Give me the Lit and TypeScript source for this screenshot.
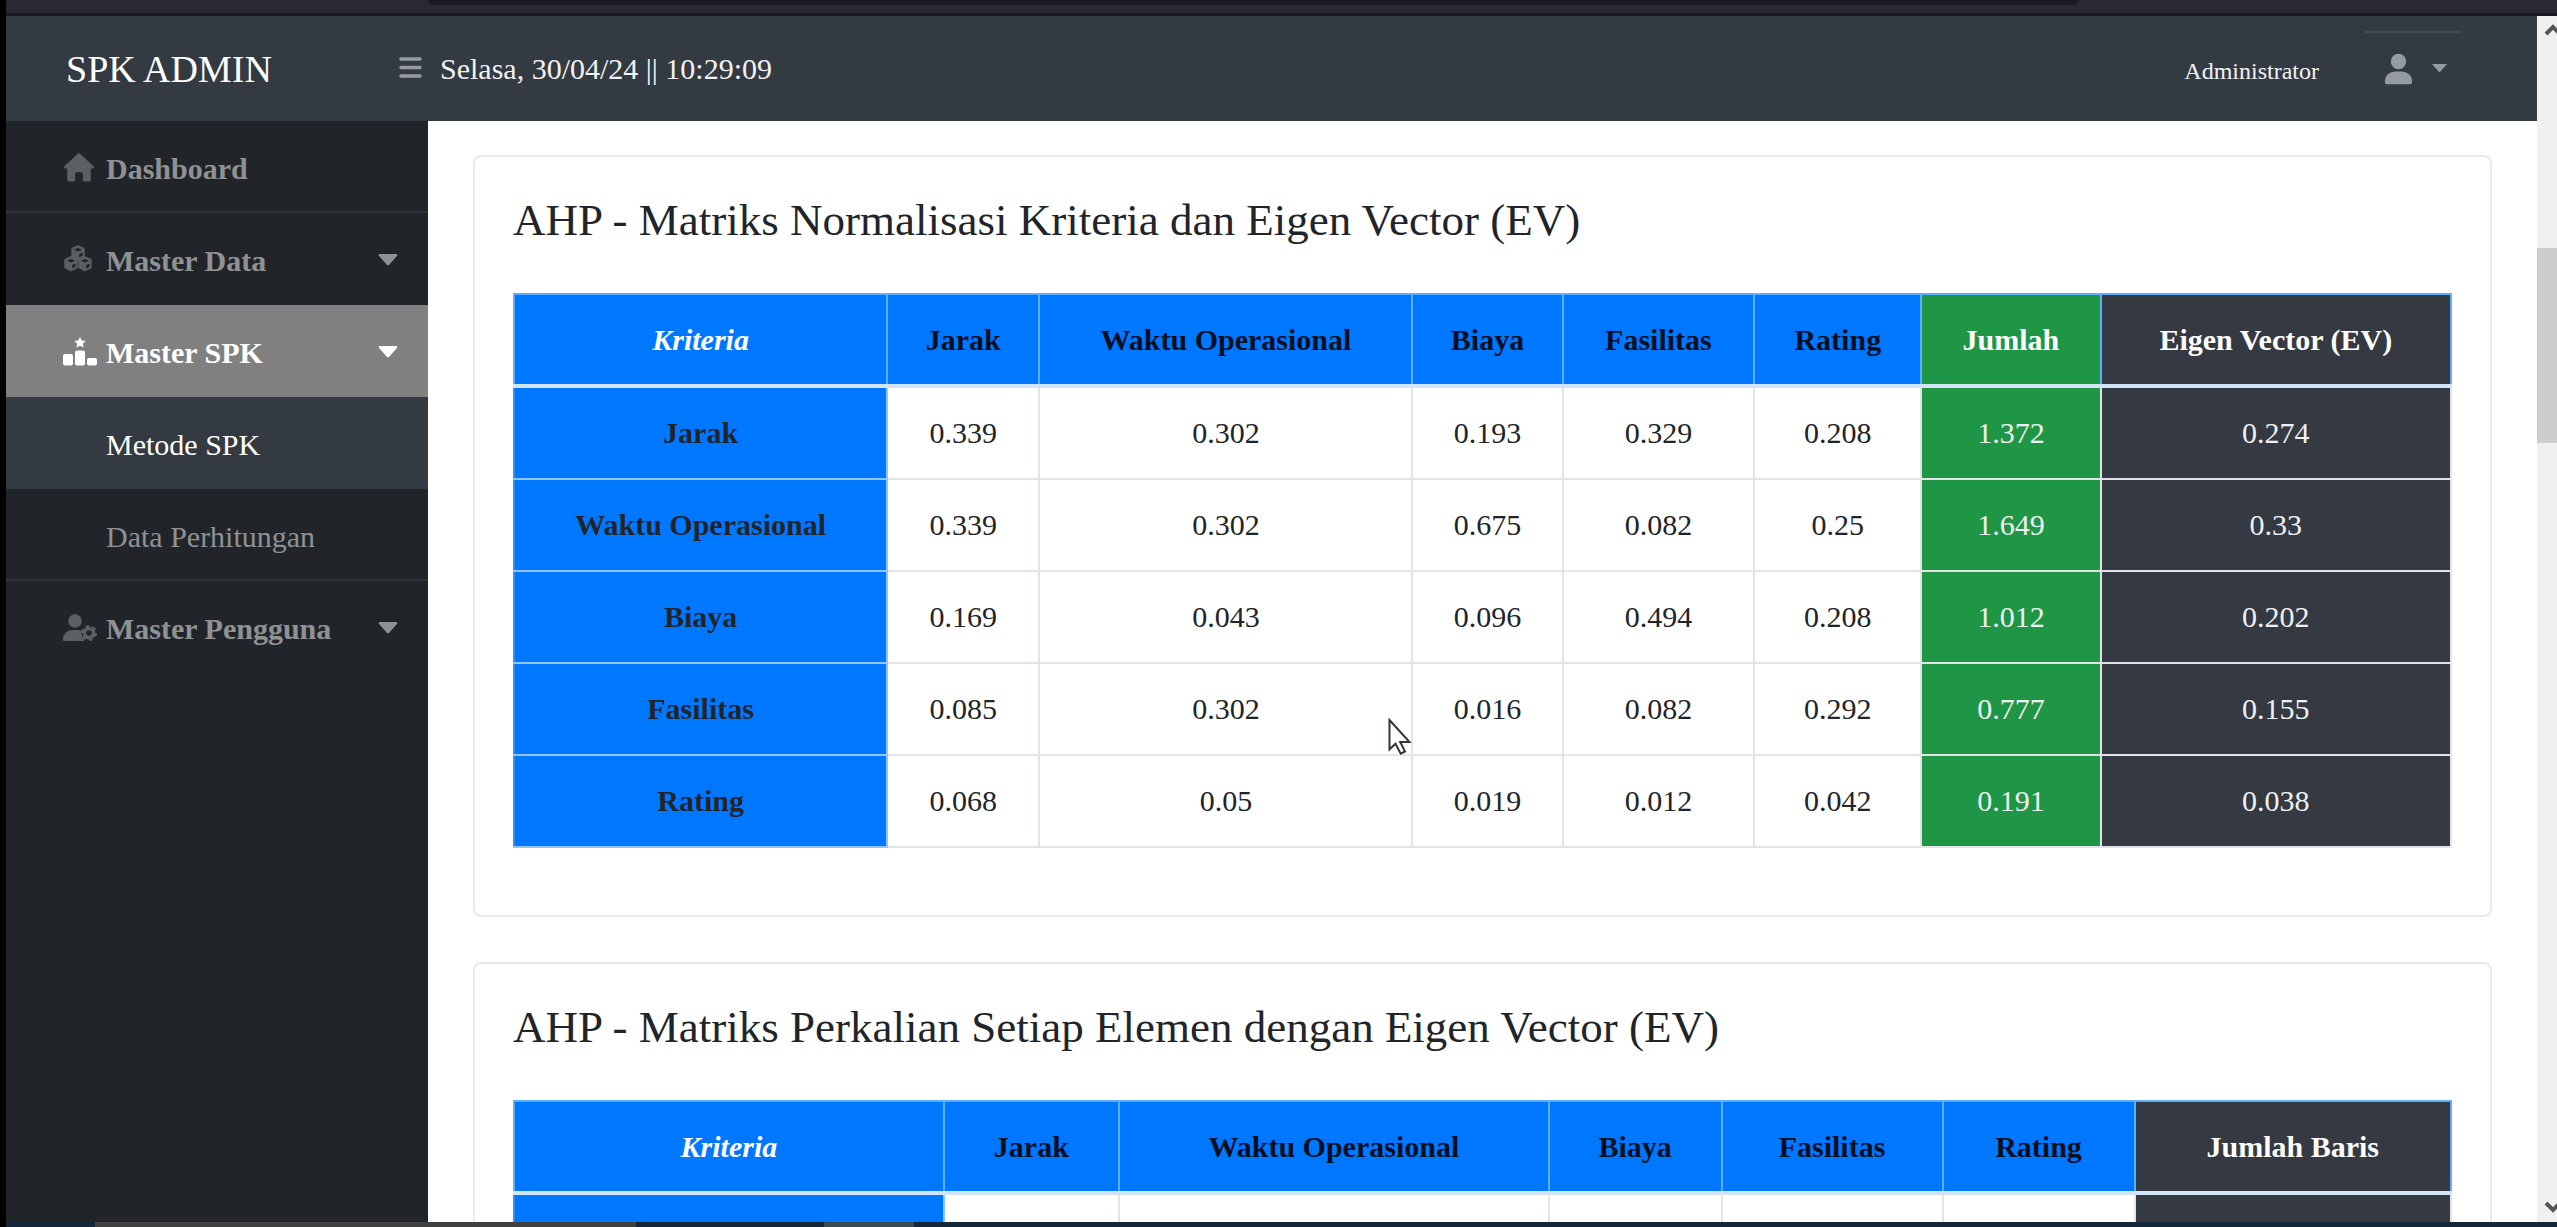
import { LitElement, html, css, svg, nothing } from "lit";
import { customElement, property } from "lit/decorators.js";

type Tone = "blue" | "green" | "dark";

interface Column {
  label: string;
  tone: Tone;
}

interface Row {
  name: string;
  values: string[];
}

interface Matrix {
  title: string;
  columns: Column[];
  rows: Row[];
}

const criteria: Column[] = ["Jarak", "Waktu Operasional", "Biaya", "Fasilitas", "Rating"].map(
  (label) => ({ label, tone: "blue" as Tone })
);

const normalised: Row[] = [
  { name: "Jarak", values: ["0.339", "0.302", "0.193", "0.329", "0.208", "1.372", "0.274"] },
  { name: "Waktu Operasional", values: ["0.339", "0.302", "0.675", "0.082", "0.25", "1.649", "0.33"] },
  { name: "Biaya", values: ["0.169", "0.043", "0.096", "0.494", "0.208", "1.012", "0.202"] },
  { name: "Fasilitas", values: ["0.085", "0.302", "0.016", "0.082", "0.292", "0.777", "0.155"] },
  { name: "Rating", values: ["0.068", "0.05", "0.019", "0.012", "0.042", "0.191", "0.038"] },
];

// Each element is multiplied by its column's eigen vector; the last cell is the row total.
const weights = normalised.map((r) => Number(r.values[6]));
const weighted: Row[] = normalised.map((r) => {
  const products = weights.map((w, i) => Number(r.values[i]) * w);
  const total = products.reduce((a, b) => a + b, 0);
  return { name: r.name, values: [...products, total].map((n) => n.toFixed(3)) };
});

const matrices: Matrix[] = [
  {
    title: "AHP - Matriks Normalisasi Kriteria dan Eigen Vector (EV)",
    columns: [
      ...criteria,
      { label: "Jumlah", tone: "green" },
      { label: "Eigen Vector (EV)", tone: "dark" },
    ],
    rows: normalised,
  },
  {
    title: "AHP - Matriks Perkalian Setiap Elemen dengan Eigen Vector (EV)",
    columns: [...criteria, { label: "Jumlah Baris", tone: "dark" }],
    rows: weighted,
  },
];

const cube = (x: number, y: number) => svg`
  <g transform="translate(${x} ${y})">
    <path d="M0 -7 L6 -4.4 V3.6 L0 6.6 L-6 3.6 V-4.4 Z" fill="currentColor" stroke="currentColor" stroke-width="1.4" stroke-linejoin="round"/>
    <path d="M-4 -3.2 L0 -1.4 L4 -3.2 L0 -4.9 Z M1.2 1 L4.6 -.6 V2.6 L1.2 4.4 Z" fill="#212529"/>
  </g>`;

const icons = {
  home: html`<svg class="icon" width="34" height="30" viewBox="0 0 34 30" aria-hidden="true">
    <path fill="currentColor" d="M14.6.9a2 2 0 0 1 2.8 0L30.4 13c1.2 1.2.6 2.6-1 2.6h-1.6v10.8c0 1.4-.8 2.1-2 2.1h-4.4c-1 0-1.6-.6-1.6-1.6v-6c0-1-.6-1.6-1.6-1.6h-4.4c-1 0-1.6.6-1.6 1.6v6c0 1-.6 1.6-1.6 1.6H6.2c-1.2 0-2-.7-2-2.1V15.600H2.600c-1.600 0-2.200-1.400-1-2.600Z"/>
  </svg>`,
  cubes: html`<svg class="icon" width="34" height="30" viewBox="0 0 34 30" aria-hidden="true">
    ${cube(15, 8)}${cube(8, 19)}${cube(22, 19)}
  </svg>`,
  podium: html`<svg class="icon" width="34" height="30" viewBox="0 0 34 30" aria-hidden="true">
    <path fill="currentColor" d="m17 0 1.700 3.500 3.900.5-2.800 2.700.7 3.900L17 8.800l-3.500 1.800.7-3.900L11.400 4l3.900-.5Z"/>
    <rect x="12" y="13.500" width="10" height="15" rx="2" fill="currentColor"/>
    <rect x="0" y="17" width="10" height="11.500" rx="2" fill="currentColor"/>
    <rect x="24" y="21" width="10" height="7.500" rx="2" fill="currentColor"/>
  </svg>`,
  userGear: html`<svg class="icon" width="34" height="30" viewBox="0 0 34 30" aria-hidden="true">
    <circle cx="12" cy="8" r="6.800" fill="currentColor"/>
    <path fill="currentColor" d="M9.500 17h5c1.600 0 3 .4 4.200 1.100-.6 3.600.4 7.200 3.100 9.900H1.600C.7 28 0 27.300 0 26.400 0 21.200 4.300 17 9.500 17Z"/>
    <circle cx="26" cy="20" r="4.600" fill="none" stroke="currentColor" stroke-width="3.600"/>
    <circle cx="26" cy="20" r="6.700" fill="none" stroke="currentColor" stroke-width="2.600" stroke-dasharray="3.500 3.516"/>
  </svg>`,
  caret: html`<svg class="caret" width="20" height="14" viewBox="0 0 20 14" aria-hidden="true">
    <path fill="currentColor" d="M2 1h16c1.300 0 1.800 1.200.9 2.100l-7.700 8.700c-.7.700-1.700.7-2.400 0L1.100 3.100C.2 2.200.7 1 2 1Z"/>
  </svg>`,
};

@customElement("spk-matrix")
export class SpkMatrix extends LitElement {
  @property({ attribute: false }) matrix!: Matrix;

  static styles = css`
    :host {
      display: block;
      box-sizing: border-box;
      padding: 36px 38px 67px;
      border: 2px solid #e9e9ea;
      border-radius: 8px;
      background: #fff;
    }
    .title {
      margin: 0 0 46px;
      font-size: 45px;
      line-height: 54px;
      font-weight: 400;
    }
    .grid {
      width: 100%;
      border-collapse: collapse;
      text-align: center;
      line-height: 45px;
    }
    .cell {
      padding: 22px 22px 23px;
      height: 45px;
      border: 2px solid #e2e4e7;
    }
    .head {
      padding-bottom: 22px;
      color: #03101f;
      border: 2px solid #5caeff;
      border-bottom: 4px solid #d3e4f8;
    }
    .corner {
      color: #fff;
      font-style: italic;
    }
    .blue {
      background: #0077ff;
    }
    .row-name {
      border-color: #8fc5fb;
      border-left-color: #2f8fff;
    }
    .green {
      background: #1f9646;
      color: #fff;
    }
    .dark {
      background: #343942;
      color: #fff;
    }
    td.green,
    td.dark {
      color: #eef0f1;
    }
  `;

  render() {
    const { title, columns, rows } = this.matrix;
    return html`
      <h4 class="title">${title}</h4>
      <table class="grid">
        <thead>
          <tr>
            <th class="cell head blue corner" scope="col">Kriteria</th>
            ${columns.map((c) => html`<th class="cell head ${c.tone}" scope="col">${c.label}</th>`)}
          </tr>
        </thead>
        <tbody>
          ${rows.map(
            (r) => html`<tr>
              <th class="cell blue row-name" scope="row">${r.name}</th>
              ${r.values.map((v, i) => {
                const tone = columns[i].tone;
                return html`<td class="cell ${tone === "blue" ? "plain" : tone}">${v}</td>`;
              })}
            </tr>`
          )}
        </tbody>
      </table>
    `;
  }
}

@customElement("app-root")
export class AppRoot extends LitElement {
  static styles = css`
    :host {
      display: flex;
      flex-direction: column;
      position: relative;
      box-sizing: border-box;
      height: 100vh;
      overflow: hidden;
      border-left: 6px solid #000;
      background: #fff;
      color: #212529;
      font: 30px/45px "Liberation Serif", "Times New Roman", serif;
    }
    .browser-edge {
      flex: none;
      height: 13px;
      background: #2c2833;
      border-bottom: 3px solid #171a20;
    }
    .address {
      height: 5px;
      margin: 0 478px 0 422px;
      background: #1b1a20;
      border-radius: 0 0 8px 8px;
    }
    .window {
      flex: 1;
      min-height: 0;
      display: flex;
    }
    .page {
      flex: 1;
      min-width: 0;
      display: flex;
      flex-direction: column;
    }
    .topbar {
      flex: none;
      height: 105px;
      display: flex;
      align-items: center;
      background: #343a42;
      color: #fff;
    }
    .brand {
      box-sizing: border-box;
      width: 393px;
      padding: 2px 0 0 60px;
      font-size: 38px;
      color: inherit;
      text-decoration: none;
    }
    .toggle,
    .account {
      display: flex;
      align-items: center;
      padding: 0;
      border: 0;
      background: none;
      color: #969ba3;
    }
    .clock {
      margin-left: 18px;
      color: #f1f2f3;
    }
    .user-name {
      margin-left: auto;
      padding-top: 6px;
      font-size: 24px;
      color: #f1f2f3;
    }
    .account {
      box-sizing: border-box;
      width: 98px;
      height: 76px;
      margin: 0 75px 0 45px;
      padding: 0 15px 2px 21px;
      justify-content: space-between;
      border-top: 2px solid #454b54;
    }
    .body {
      flex: 1;
      min-height: 0;
      display: flex;
    }
    .sidebar {
      flex: none;
      width: 422px;
      background: #212529;
    }
    .menu {
      margin: 0;
      padding: 0;
      list-style: none;
    }
    .link {
      box-sizing: border-box;
      display: flex;
      align-items: center;
      gap: 9px;
      width: 100%;
      height: 92px;
      padding: 4px 30px 0 57px;
      border: 0;
      border-bottom: 2px solid #303437;
      background: none;
      color: #8f9294;
      font: inherit;
      font-weight: 700;
      text-align: left;
      text-decoration: none;
    }
    .link .icon {
      color: #5c6063;
    }
    .link .caret {
      margin-left: auto;
    }
    .open,
    .link.open .icon {
      color: #fff;
    }
    .open {
      background: #808080;
      border-bottom-color: #808080;
    }
    .bare {
      border-bottom-color: transparent;
    }
    .sub {
      padding-left: 100px;
      font-weight: 400;
    }
    .current {
      background: #343a42;
      border-bottom-color: #343a42;
      color: #fff;
    }
    .content {
      flex: 1;
      min-width: 0;
      display: flex;
      flex-direction: column;
      gap: 45px;
      padding: 34px 45px 0;
      overflow: hidden;
    }
    .content spk-matrix {
      flex: none;
    }
    .scroll {
      flex: none;
      width: 20px;
      display: flex;
      flex-direction: column;
      background: #f0f0f0;
      overflow: hidden;
    }
    .thumb {
      flex: none;
      margin-top: 196px;
      height: 195px;
      background: #cdcdcd;
    }
    .arrow {
      flex: none;
      width: 26px;
      height: 36px;
    }
    .push {
      margin-top: auto;
    }
    .taskbar {
      flex: none;
      display: flex;
      height: 5px;
      background: #15283a;
    }
    .task-a {
      width: 541px;
      margin-left: 89px;
      background: #414141;
    }
    .task-b {
      width: 90px;
      margin-left: 188px;
      background: #3a4a53;
    }
    .pointer {
      position: absolute;
      left: 1382px;
      top: 718px;
    }
  `;

  private item(label: string, icon: unknown, cls = "", group = true) {
    return html`<li>
      ${group
        ? html`<button type="button" class="link ${cls}">${icon}<span>${label}</span>${icons.caret}</button>`
        : html`<a href="#" class="link ${cls}">${icon}<span>${label}</span></a>`}
    </li>`;
  }

  render() {
    return html`
      <div class="browser-edge"><div class="address"></div></div>
      <div class="window">
        <div class="page">
          <header class="topbar">
            <a class="brand" href="#">SPK ADMIN</a>
            <button class="toggle" type="button" aria-label="Menu">
              <svg width="23" height="26" viewBox="0 0 23 26" aria-hidden="true">
                <path stroke="currentColor" stroke-width="3.500" stroke-linecap="round" d="M2 3h19M2 11.500h19M2 20h19" />
              </svg>
            </button>
            <span class="clock">Selasa, 30/04/24 || 10:29:09</span>
            <span class="user-name">Administrator</span>
            <button class="account" type="button" aria-label="Akun">
              <svg width="27" height="32" viewBox="0 0 27 32" aria-hidden="true">
                <circle cx="13.500" cy="8.500" r="7.700" fill="currentColor" />
                <path fill="currentColor" d="M10.500 18.500h6c5.500 0 10.500 4 10.500 9.500v1.600c0 1-.6 1.600-1.600 1.600H1.600c-1 0-1.600-.6-1.600-1.600V28c0-5.500 5-9.500 10.500-9.500Z" />
              </svg>
              <svg width="15" height="9" viewBox="0 0 15 9" aria-hidden="true">
                <path fill="currentColor" d="M0 0h15L7.500 8.500Z" />
              </svg>
            </button>
          </header>
          <div class="body">
            <nav class="sidebar">
              <ul class="menu">
                ${this.item("Dashboard", icons.home, "", false)}
                ${this.item("Master Data", icons.cubes, "bare")}
                ${this.item("Master SPK", icons.podium, "open")}
                ${this.item("Metode SPK", nothing, "sub current", false)}
                ${this.item("Data Perhitungan", nothing, "sub", false)}
                ${this.item("Master Pengguna", icons.userGear, "bare")}
              </ul>
            </nav>
            <main class="content">
              ${matrices.map((m) => html`<spk-matrix .matrix=${m}></spk-matrix>`)}
            </main>
          </div>
        </div>
        <div class="scroll" aria-hidden="true">
          <svg class="arrow" viewBox="0 0 26 36">
            <path d="M9 18l7-7 7 7" fill="none" stroke="#555" stroke-width="4" />
          </svg>
          <div class="thumb"></div>
          <svg class="arrow push" viewBox="0 0 26 36">
            <path d="M9 17l7 7 7-7" fill="none" stroke="#555" stroke-width="4" />
          </svg>
        </div>
      </div>
      <div class="taskbar"><div class="task-a"></div><div class="task-b"></div></div>
      <svg class="pointer" width="24" height="38" viewBox="0 0 24 38" aria-hidden="true">
        <path d="M1.500 2v29.500l6-5.800 5.200 10 4.300-2.200-4.800-9.500h9.300Z" fill="#fff" stroke="#33353a" stroke-width="2" />
      </svg>
    `;
  }
}
